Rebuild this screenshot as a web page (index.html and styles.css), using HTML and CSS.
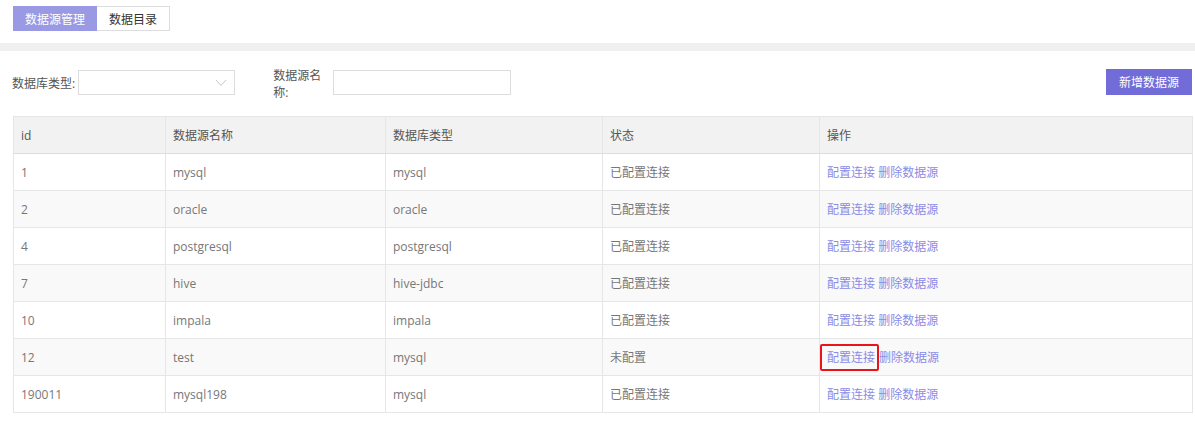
FILE: index.html
```html
<!DOCTYPE html>
<html lang="zh">
<head>
    <meta charset="UTF-8">
    <title>数据源管理</title>
    <link rel="stylesheet" href="styles.css">
</head>
<body>
    <div class="tabs">
        <a href="#" class="tab active">数据源管理</a>
        <a href="#" class="tab">数据目录</a>
    </div>
    <div class="divider"></div>

    <div class="filters">
        <div class="field">
            <label class="field-label">数据库类型:</label>
            <div class="select">
                <svg width="12" height="8" viewBox="0 0 12 8"><path d="M1 1 L6 6.5 L11 1" fill="none" stroke="#c8c8c8" stroke-width="1"/></svg>
            </div>
        </div>
        <div class="field">
            <label class="field-label wrap">数据源名称:</label>
            <input class="text-input" type="text">
        </div>
        <button class="add-button">新增数据源</button>
    </div>

    <table class="grid">
        <colgroup>
            <col style="width:152px"><col style="width:220px"><col style="width:217px"><col style="width:217px"><col>
        </colgroup>
        <thead>
            <tr><th>id</th><th>数据源名称</th><th>数据库类型</th><th>状态</th><th>操作</th></tr>
        </thead>
        <tbody>
            <tr><td>1</td><td>mysql</td><td>mysql</td><td>已配置连接</td><td><a href="#">配置连接</a> <a href="#">删除数据源</a></td></tr>
            <tr><td>2</td><td>oracle</td><td>oracle</td><td>已配置连接</td><td><a href="#">配置连接</a> <a href="#">删除数据源</a></td></tr>
            <tr><td>4</td><td>postgresql</td><td>postgresql</td><td>已配置连接</td><td><a href="#">配置连接</a> <a href="#">删除数据源</a></td></tr>
            <tr><td>7</td><td>hive</td><td>hive-jdbc</td><td>已配置连接</td><td><a href="#">配置连接</a> <a href="#">删除数据源</a></td></tr>
            <tr><td>10</td><td>impala</td><td>impala</td><td>已配置连接</td><td><a href="#">配置连接</a> <a href="#">删除数据源</a></td></tr>
            <tr><td>12</td><td>test</td><td>mysql</td><td>未配置</td><td><a href="#" class="marked">配置连接</a><a href="#">删除数据源</a></td></tr>
            <tr><td>190011</td><td>mysql198</td><td>mysql</td><td>已配置连接</td><td><a href="#">配置连接</a> <a href="#">删除数据源</a></td></tr>
        </tbody>
    </table>
</body>
</html>
```

FILE: styles.css
```css
body {
    margin: 0;
    font-family: "Open Sans", "Noto Sans CJK SC", sans-serif;
    font-size: 12px;
    color: #777;
    background: #fff;
}
.tabs {
    display: flex;
    padding: 6px 0 0 13px;
}
.tab {
    display: block;
    height: 25px;
    line-height: 25px;
    box-sizing: border-box;
    padding: 0 12px;
    border: 1px solid #ddd;
    color: #333;
    text-decoration: none;
    font-size: 12px;
}
.tab.active {
    padding: 0 11px;
    background-color: #9a9ae4;
    border-color: #9a9ae4;
    color: #fff;
}
.tab + .tab {
    border-left: none;
}
.divider {
    height: 8px;
    background-color: #f0f0f0;
    margin-top: 12px;
}
.filters {
    display: flex;
    align-items: center;
    padding: 18px 3px 0 12px;
    height: 27px;
}
.field {
    display: flex;
    align-items: center;
}
.field + .field {
    margin-left: 38px;
}
.field-label {
    color: #555;
    margin-right: 3px;
}
.field-label.wrap {
    width: 52px;
    line-height: 17px;
    margin-top: 3px;
    margin-right: 8px;
}
.select {
    width: 157px;
    height: 25px;
    box-sizing: border-box;
    border: 1px solid #ddd;
    display: flex;
    align-items: center;
    justify-content: flex-end;
    padding-right: 7px;
}
.text-input {
    width: 178px;
    height: 25px;
    box-sizing: border-box;
    border: 1px solid #ddd;
    margin: 0;
    padding: 0 6px;
}
.add-button {
    margin-left: auto;
    margin-top: -1px;
    width: 86px;
    height: 26px;
    border: none;
    background-color: #716cd8;
    color: #fff;
    font-family: inherit;
    font-size: 12px;
    cursor: pointer;
}
.grid {
    margin: 20px 0 0 13px;
    width: 1180px;
    border-collapse: collapse;
    table-layout: fixed;
}
.grid th,
.grid td {
    border: 1px solid #e6e6e6;
    height: 36px;
    padding: 0 7px;
    text-align: left;
    font-weight: normal;
}
.grid th {
    background-color: #f2f2f2;
    color: #555;
    border-bottom: 1px solid #ddd;
}
.grid tbody tr:nth-child(even) {
    background-color: #f9f9f9;
}
.grid td a {
    color: #8b8be6;
    text-decoration: none;
}
.grid td a.marked {
    border: 2px solid #e8161b;
    border-radius: 2px;
    padding: 3px 2px 3px 5px;
    margin-left: -7px;
}
```
